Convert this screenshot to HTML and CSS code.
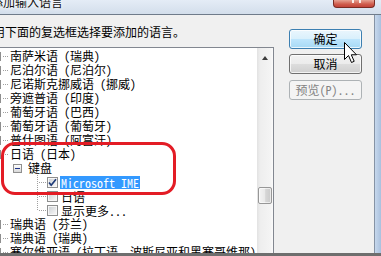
FILE: index.html
```html
<!DOCTYPE html>
<html lang="zh-CN">
<head>
<meta charset="utf-8">
<title>添加输入语言</title>
<link rel="stylesheet" href="styles.css">
</head>
<body>
  <div class="titlebar">
    <span class="title">添加输入语言</span>
    <span class="close"><span class="close-x"></span></span>
  </div>
  <div class="main">
    <div class="client">
      <div class="left">
        <div class="instruction">用下面的复选框选择要添加的语言。</div>
        <div class="tree">
          <div class="rows">
            <div class="row"><span class="j0"></span><span class="label">南萨米语 (瑞典)</span></div>
            <div class="row"><span class="j0"></span><span class="label">尼泊尔语 (尼泊尔)</span></div>
            <div class="row"><span class="j0"></span><span class="label">尼诺斯克挪威语 (挪威)</span></div>
            <div class="row"><span class="j0"></span><span class="label">旁遮普语 (印度)</span></div>
            <div class="row"><span class="j0"></span><span class="label">葡萄牙语 (巴西)</span></div>
            <div class="row"><span class="j0"></span><span class="label">葡萄牙语 (葡萄牙)</span></div>
            <div class="row"><span class="j0"></span><span class="label">普什图语 (阿富汗)</span></div>
            <div class="row"><span class="j0"></span><span class="label">日语 (日本)</span></div>
            <div class="row lvl1"><span class="exp"></span><span class="label">键盘</span></div>
            <div class="row lvl2"><span class="j2"></span><span class="cb"><svg width="9" height="9" viewBox="0 0 9 9"><path d="M1 4.5 L3.2 7.2 L8 1.2" fill="none" stroke="#1d3a78" stroke-width="1.7"/></svg></span><span class="label2 sel">Microsoft IME</span></div>
            <div class="row lvl2"><span class="j2"></span><span class="cb"></span><span class="label2">日语</span></div>
            <div class="row lvl2"><span class="j2 last"></span><span class="cb"></span><span class="label2">显示更多...</span></div>
            <div class="row"><span class="j0"></span><span class="label">瑞典语 (芬兰)</span></div>
            <div class="row"><span class="j0"></span><span class="label">瑞典语 (瑞典)</span></div>
            <div class="row"><span class="j0"></span><span class="label">塞尔维亚语 (拉丁语，波斯尼亚和黑塞哥维那)</span></div>
          </div>
          <div class="scrollbar">
            <div class="sb-up"><span class="arrow-up"></span></div>
            <div class="sb-thumb"></div>
          </div>
        </div>
      </div>
      <div class="right">
        <div class="btn default">确定</div>
        <div class="btn">取消</div>
        <div class="btn disabled">预览(P)...</div>
      </div>
    </div>
    <div class="frame"></div>
  </div>
  <div class="bottom"></div>

  <div class="highlight-ring"></div>
  <svg class="cursor" width="14" height="22" viewBox="0 0 14 22">
    <path d="M0.5 0.5 V17.5 L4.5 13.5 L7.5 20.5 L10.2 19.3 L7.3 12.8 H12.5 Z" fill="#fff" stroke="#000" stroke-width="1" stroke-linejoin="miter"/>
  </svg>
</body>
</html>
```
FILE: styles.css
```css
html, body {
  margin: 0;
  padding: 0;
}
body {
  position: relative;
  width: 381px;
  height: 256px;
  overflow: hidden;
  background: #f0f0f0;
  font-family: "Noto Sans Mono CJK SC", "Noto Sans CJK SC", sans-serif;
  font-size: 12px;
  color: #000;
  display: flex;
  flex-direction: column;
}

/* title bar */
.titlebar {
  flex: none;
  height: 14px;
  border-bottom: 1px solid #6f7b8a;
  background: linear-gradient(#e4ecf6, #d3deeb);
  display: flex;
  overflow: hidden;
}
.title {
  margin-left: -9px;
  margin-top: -4px;
  height: 12px;
  line-height: 12px;
  white-space: nowrap;
  color: #101010;
  text-shadow: 0 0 3px #fff, 0 0 6px #fff;
}
.close {
  margin-left: auto;
  margin-right: 6px;
  width: 42px;
  height: 8px;
  box-sizing: border-box;
  border: 1px solid #7a2b22;
  border-top: none;
  border-radius: 0 0 4px 4px;
  background: linear-gradient(#e6a293, #cf5b4b 60%, #c2433a);
  display: flex;
  justify-content: center;
}
.close-x {
  width: 9px;
  height: 3px;
  margin-left: 4px;
  background: linear-gradient(to right, #fff 0 2px, transparent 2px 7px, #fff 7px 9px);
  opacity: 0.85;
}

/* main area */
.main {
  flex: 1;
  min-height: 0;
  display: flex;
}
.client {
  width: 374px;
  flex: none;
  border-right: 1px solid #8593a5;
  display: flex;
  overflow: hidden;
}
.frame {
  flex: 1;
  background: linear-gradient(to right, #c6d7ec, #a9c1de);
}
.bottom {
  flex: none;
  height: 3px;
  background: #6e6e6e;
}

/* left column */
.left {
  width: 274px;
  flex: none;
  display: flex;
  flex-direction: column;
}
.instruction {
  margin: 10px 0 8px -7px;
  height: 14px;
  line-height: 14px;
  white-space: nowrap;
}
.tree {
  flex: 1;
  min-height: 0;
  border-top: 1px solid #828790;
  border-right: 1px solid #828790;
  background: #fff;
  display: flex;
  overflow: hidden;
}
.rows {
  flex: 1;
  min-width: 0;
  padding-top: 1px;
  overflow: hidden;
}
.row {
  display: flex;
  align-items: center;
  height: 14px;
  white-space: nowrap;
}
.label {
  line-height: 14px;
}
.j0 {
  flex: none;
  width: 10px;
  height: 14px;
  background:
    linear-gradient(#8f8f8f, #8f8f8f) 0 3px / 1px 9px no-repeat,
    repeating-linear-gradient(to right, #a0a0a0 0 1px, transparent 1px 2px) 3px 7px / 6px 1px no-repeat;
}
.lvl1 {
  padding-left: 13px;
}
.exp {
  flex: none;
  width: 9px;
  height: 9px;
  box-sizing: border-box;
  margin-right: 6px;
  border: 1px solid #8f8f8f;
  background: linear-gradient(#ffffff, #d8d8d8);
  display: flex;
  align-items: center;
  justify-content: center;
}
.exp::after {
  content: "";
  width: 5px;
  height: 1px;
  background: #1f3589;
}
.lvl2 {
  padding-left: 37px;
}
.j2 {
  flex: none;
  width: 10px;
  height: 14px;
  background:
    repeating-linear-gradient(#a0a0a0 0 1px, transparent 1px 2px) 0 0 / 1px 14px no-repeat,
    repeating-linear-gradient(to right, #a0a0a0 0 1px, transparent 1px 2px) 2px 7px / 8px 1px no-repeat;
}
.j2.last {
  background:
    repeating-linear-gradient(#a0a0a0 0 1px, transparent 1px 2px) 0 0 / 1px 8px no-repeat,
    repeating-linear-gradient(to right, #a0a0a0 0 1px, transparent 1px 2px) 2px 7px / 8px 1px no-repeat;
}
.cb {
  flex: none;
  width: 11px;
  height: 11px;
  box-sizing: border-box;
  margin-right: 2px;
  border: 1px solid #8e8f8f;
  background: linear-gradient(135deg, #c9cdd2, #f2f2f2 80%);
  box-shadow: inset 0 0 0 1px #f7f7f7;
  display: flex;
  align-items: center;
  justify-content: center;
}
.cb svg {
  display: block;
}
.label2 {
  padding: 0 1px;
  height: 13px;
  line-height: 13px;
}
.sel {
  background: #3399ff;
  color: #fff;
}

/* scrollbar */
.scrollbar {
  flex: none;
  width: 16px;
  background: linear-gradient(to right, #e2e2e2, #eeeeee 20%, #f4f4f4 85%, #fbfbfb);
  display: flex;
  flex-direction: column;
}
.sb-up {
  height: 17px;
  display: flex;
  align-items: center;
  justify-content: center;
}
.arrow-up {
  width: 0;
  height: 0;
  margin-top: 3px;
  border-left: 3.5px solid transparent;
  border-right: 3.5px solid transparent;
  border-bottom: 4px solid #3c3c3c;
}
.sb-thumb {
  margin-top: 122px;
  margin-left: 1px;
  width: 14px;
  height: 17px;
  box-sizing: border-box;
  border: 1px solid #979797;
  border-radius: 2px;
  background: linear-gradient(to right, #f4f4f4, #e8e8e8 50%, #d6d6d6 55%, #cacaca);
  box-shadow: inset 0 0 0 1px rgba(255,255,255,0.6);
}

/* right column buttons */
.right {
  flex: 1;
  padding-top: 14px;
  padding-left: 15px;
  display: flex;
  flex-direction: column;
  gap: 5px;
}
.btn {
  width: 73px;
  height: 20px;
  box-sizing: border-box;
  border: 1px solid #707070;
  border-radius: 3px;
  background: linear-gradient(#f2f2f2 0, #ebebeb 50%, #dddddd 50%, #cfcfcf 100%);
  box-shadow: inset 0 0 0 1px rgba(255,255,255,0.75);
  text-align: center;
  line-height: 18px;
  white-space: nowrap;
}
.btn.default {
  border-color: #3c7fb1;
  background: linear-gradient(#eaf6fd 0, #d9f0fc 50%, #bee6fd 50%, #a7d9f5 100%);
}
.btn.disabled {
  margin-top: 1px;
  border-color: #adb2b5;
  background: #f4f4f4;
  box-shadow: none;
  color: #838383;
}

/* overlays */
.highlight-ring {
  position: absolute;
  left: 1px;
  top: 142px;
  width: 175px;
  height: 53px;
  box-sizing: border-box;
  border: 3px solid #e31c25;
  border-radius: 14px;
}
.cursor {
  position: absolute;
  left: 344px;
  top: 42px;
}
```
